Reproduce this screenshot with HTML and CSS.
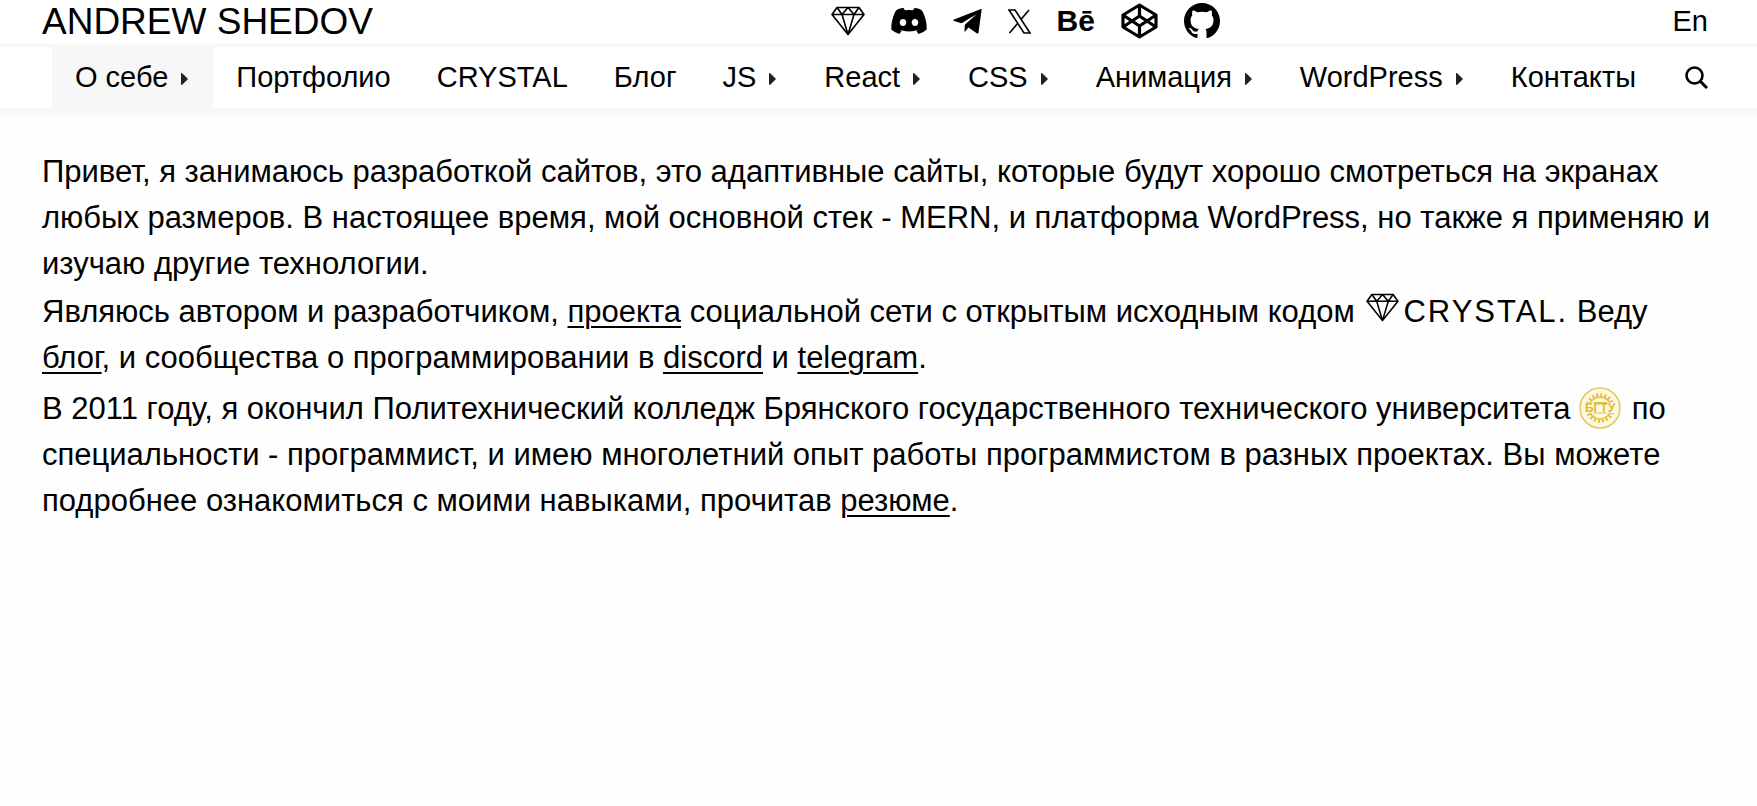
FILE: index.html
```html
<!DOCTYPE html>
<html lang="ru">
<head>
<meta charset="utf-8">
<meta name="viewport" content="width=device-width, initial-scale=1">
<title>Andrew Shedov</title>
<link rel="stylesheet" href="styles.css">
</head>
<body>
<svg class="sprite" aria-hidden="true">
  <symbol id="diamond" viewBox="0 0 34 30">
    <path d="M6 1.500H28L33 8.500L17 28.500L1 8.500ZM1 8.500H33M6 1.500L11 8.500L17 1.500L23 8.500L28 1.500M11 8.500L17 28.500L23 8.500" fill="none" stroke="currentColor" stroke-width="1.600" stroke-linejoin="round"/>
  </symbol>
  <symbol id="arrow" viewBox="0 0 7 12"><path d="M0 0Q1 0 2 1L7 6L2 11Q1 12 0 12Z" fill="#222"/></symbol>
</svg>
<header class="header">
  <div class="topbar">
    <a class="brand" href="#">ANDREW SHEDOV</a>
    <div class="socials">
      <a href="#" aria-label="Crystal"><svg class="icon-diamond"><use href="#diamond"/></svg></a>
      <a href="#" aria-label="Discord"><svg class="icon-discord" viewBox="0 0 36 26"><path fill-rule="evenodd" d="M7.500 1Q10 .1 12.500 0L14 2.200Q18 1.700 22 2.200L23.500 0Q26 .1 28.500 1Q31 1.800 32 4.200Q36 12.500 35.700 21.500Q32 25 27.500 26L25.300 22.800L28 21.500Q18 25.500 8 21.500L10.700 22.800L8.500 26Q4 25 .3 21.500Q0 12.500 4 4.200Q5 1.800 7.500 1ZM12 11C10 11 8.700 12.600 8.700 14.500S10 18 12 18S15.300 16.400 15.300 14.500S14 11 12 11ZM24 11C22 11 20.700 12.600 20.700 14.500S22 18 24 18S27.300 16.400 27.300 14.500S26 11 24 11Z"/></svg></a>
      <a href="#" aria-label="Telegram"><svg class="icon-telegram" viewBox="0 0 29 25"><path d="M28.700 0L25.500 23.800Q25 25 23.700 24.200L15.500 18.500L12.200 22.500Q11.500 23.200 11.500 22L11.800 15.800L23.500 5.200L8.500 14.200L1 12Q-.6 11.300 1 10.500L27.300.3Z"/></svg></a>
      <a href="#" aria-label="X"><svg class="icon-x" viewBox="0 0 23 25"><path d="M1 1H7L22 24H16ZM21 1L12.500 11M10 14L1.500 24" fill="none" stroke="#000" stroke-width="1.600"/></svg></a>
      <a class="behance" href="#" aria-label="Behance">Bē</a>
      <a href="#" aria-label="CodePen"><svg class="icon-codepen" viewBox="0 0 37 36"><path d="M18.500 2L35 12V24L18.500 34L2 24V12ZM18.500 2V13M18.500 23V34M2 12L18.500 23L35 12M2 24L18.500 13L35 24" fill="none" stroke="#000" stroke-width="3.200" stroke-linejoin="round"/></svg></a>
      <a href="#" aria-label="GitHub"><svg class="icon-github" viewBox="0 0 16 16"><path d="M8 0C3.580 0 0 3.580 0 8c0 3.540 2.290 6.530 5.470 7.590.4.07.55-.17.55-.38 0-.19-.01-.82-.01-1.490-2.010.37-2.530-.49-2.690-.94-.09-.23-.48-.94-.82-1.130-.28-.15-.68-.52-.01-.53.63-.01 1.080.58 1.230.82.72 1.210 1.870.87 2.330.66.07-.52.28-.87.51-1.070-1.780-.2-3.640-.89-3.640-3.950 0-.87.31-1.590.82-2.150-.08-.2-.36-1.020.08-2.120 0 0 .67-.21 2.200.82.64-.18 1.320-.27 2-.27s1.360.09 2 .27c1.530-1.040 2.200-.82 2.200-.82.44 1.100.16 1.920.08 2.120.51.56.82 1.270.82 2.150 0 3.070-1.870 3.750-3.650 3.950.29.25.54.73.54 1.480 0 1.070-.01 1.930-.01 2.200 0 .21.15.46.55.38A8.010 8.010 0 0016 8c0-4.420-3.580-8-8-8z"/></svg></a>
    </div>
    <a class="lang" href="#">En</a>
  </div>
  <nav class="nav">
    <a class="item active" href="#">О себе<svg class="arrow"><use href="#arrow"/></svg></a>
    <a class="item" href="#">Портфолио</a>
    <a class="item" href="#">CRYSTAL</a>
    <a class="item" href="#">Блог</a>
    <a class="item" href="#">JS<svg class="arrow"><use href="#arrow"/></svg></a>
    <a class="item" href="#">React<svg class="arrow"><use href="#arrow"/></svg></a>
    <a class="item" href="#">CSS<svg class="arrow"><use href="#arrow"/></svg></a>
    <a class="item" href="#">Анимация<svg class="arrow"><use href="#arrow"/></svg></a>
    <a class="item" href="#">WordPress<svg class="arrow"><use href="#arrow"/></svg></a>
    <a class="item" href="#">Контакты</a>
    <button class="search" type="button" aria-label="Поиск"><svg class="icon-search" viewBox="0 0 23 23"><circle cx="9.500" cy="9.500" r="8" fill="none" stroke="#000" stroke-width="2.600"/><path d="M15 15L22 22" stroke="#000" stroke-width="3"/></svg></button>
  </nav>
</header>
<main class="content">
  <p>Привет, я занимаюсь разработкой сайтов, это адаптивные сайты, которые будут хорошо смотреться на экранах любых размеров. В настоящее время, мой основной стек - MERN, и платформа WordPress, но также я применяю и изучаю другие технологии.</p>
  <p>Являюсь автором и разработчиком, <a href="#">проекта</a> социальной сети с открытым исходным кодом <span class="crystal"><svg class="inline-diamond" aria-hidden="true"><use href="#diamond"/></svg>CRYSTAL.</span> Веду <a href="#">блог</a>, и сообщества о программировании в <a href="#">discord</a> и <a href="#">telegram</a>.</p>
  <p>В 2011 году, я окончил Политехнический колледж Брянского государственного технического университета <svg class="emblem" viewBox="0 0 42 42"><circle cx="21" cy="21" r="20" fill="#fdf8e4" stroke="#e3c85c" stroke-width="1.500"/><circle cx="21" cy="21" r="13" fill="none" stroke="#e3bf40" stroke-width="3.500" stroke-dasharray="2 2.080"/><circle cx="21" cy="21" r="11" fill="none" stroke="#e3bf40" stroke-width="1.500"/><rect x="5" y="15.500" width="32" height="10.500" fill="#fdf8e4"/><path d="M14 15.500H28M14 26H28" stroke="#e3bf40" stroke-width="1.200"/><text class="emblem-text" x="21" y="25" text-anchor="middle">БГТУ</text></svg> по специальности - программист, и имею многолетний опыт работы программистом в разных проектах. Вы можете подробнее ознакомиться с моими навыками, прочитав <a href="#">резюме</a>.</p>
</main>
</body>
</html>
```

FILE: styles.css
```css
* { box-sizing: border-box; }
body {
  margin: 0;
  background: #fefefe;
  color: #000;
  font-family: "Liberation Sans", Arial, sans-serif;
}
a { color: inherit; }
.sprite { position: absolute; width: 0; height: 0; }
.header {
  background: #fff;
  box-shadow: 0 6px 1px #f8f8f8, 0 14px 4px #fbfbfb;
}
.header a { text-decoration: none; }
.topbar {
  display: flex;
  justify-content: space-between;
  align-items: center;
  height: 47px;
  padding: 0 49px 2px 42px;
  border-bottom: 3px double #f2f2f2;
}
.brand { font-size: 37px; line-height: 41px; }
.socials { display: flex; align-items: center; gap: 26px; margin-left: 5px; }
.socials a { display: flex; }
.icon-diamond { width: 34px; height: 30px; }
.icon-discord { width: 36px; height: 26px; }
.icon-telegram { width: 29px; height: 25px; }
.icon-x { width: 23px; height: 25px; }
.icon-codepen { width: 37px; height: 36px; }
.icon-github { width: 36px; height: 36px; }
.behance { font-size: 30px; line-height: 36px; font-weight: bold; }
.lang { font-size: 29px; line-height: 41px; }
.nav { display: flex; padding: 0 26px 0 52px; }
.item {
  display: flex;
  align-items: center;
  padding: 0 23px;
  font-size: 29px;
  line-height: 61px;
  white-space: nowrap;
}
.active { background: #f7f7f7; }
.arrow { width: 7px; height: 12px; margin: 2px 2px 0 13px; }
.search {
  display: flex;
  align-items: center;
  margin-left: auto;
  padding: 0 23px;
  border: 0;
  background: none;
}
.icon-search { width: 23px; height: 23px; }
.content { padding: 41px 42px; font-size: 31px; line-height: 46px; }
.content p { margin: 0; }
.content a { text-decoration-thickness: 2px; text-underline-offset: 4px; }
.crystal { letter-spacing: 2px; white-space: nowrap; }
.inline-diamond { width: 33px; height: 29px; margin: 6px 4px 0 3px; }
.emblem { width: 42px; height: 42px; margin: 6px 2px 3px 0; vertical-align: -13px; }
.emblem-text { font-size: 12px; font-weight: bold; fill: #e3b92c; }
```
